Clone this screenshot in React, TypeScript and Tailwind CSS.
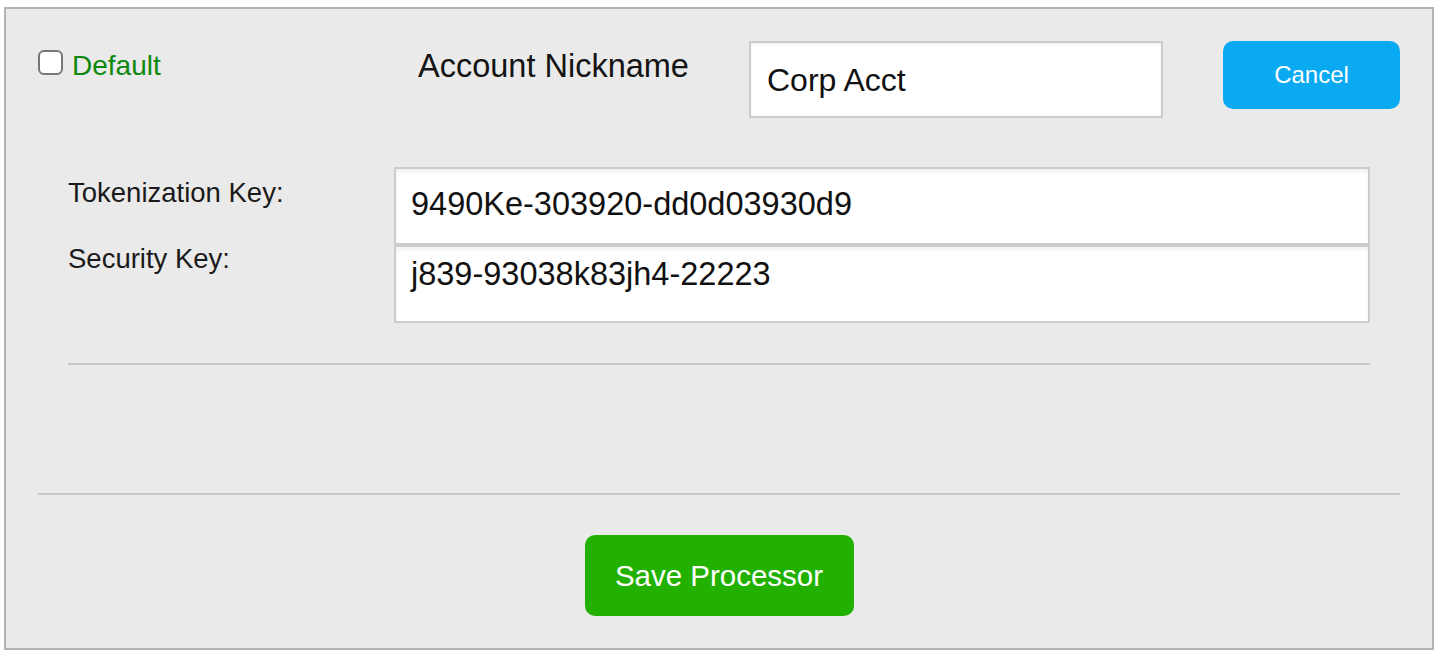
import React from "react";

export default function App() {
  return (
    <div className="pt-[7px] pl-[4px] font-['Liberation_Sans',Arial,sans-serif]">
      <div className="w-[1430px] h-[643px] border-2 border-[#b3b3b3] bg-[#eaeaea]">
        {/* Top row */}
        <div className="flex items-start pt-[32px] pl-[32px] pr-[32px]">
          <div className="w-[380px] flex items-start pt-[9px]">
            <div className="w-[25px] h-[25px] rounded-[6px] border-2 border-[#777777] bg-white" />
            <span className="ml-[9px] mt-[0px] text-[28px] leading-[31px] text-[#0d880d]">Default</span>
          </div>
          <div className="w-[331px] pt-[7px] text-[32.5px] leading-[36px] text-[#141414]">Account Nickname</div>
          <div className="w-[414px] h-[77px] border-2 border-[#cccccc] bg-white pl-[16px] pt-[19px] text-[32px] leading-[36px] text-[#111111] shadow-[inset_0_2px_3px_rgba(0,0,0,0.05)]">
            Corp Acct
          </div>
          <button className="ml-[60px] w-[177px] h-[68px] rounded-[10px] bg-[#09aaf2] text-white text-[24px] leading-[28px]">
            Cancel
          </button>
        </div>

        {/* Keys */}
        <div className="mx-[62px] mt-[49px] flex">
          <div className="w-[326px] flex flex-col text-[27.5px] leading-[30px] text-[#1a1a1a]">
            <div className="mt-[11px]">Tokenization Key:</div>
            <div className="mt-[36px]">Security Key:</div>
          </div>
          <div className="flex-1 flex flex-col">
            <div className="h-[78px] border-2 border-[#cccccc] bg-white pl-[15px] pt-[17px] text-[32.5px] leading-[36px] text-[#111111] shadow-[inset_0_3px_4px_rgba(0,0,0,0.06)]">
              9490Ke-303920-dd0d03930d9
            </div>
            <div className="h-[78px] border-2 border-[#cccccc] bg-white pl-[15px] pt-[9px] text-[32.5px] leading-[36px] text-[#111111] shadow-[inset_0_3px_4px_rgba(0,0,0,0.06)]">
              j839-93038k83jh4-22223
            </div>
          </div>
        </div>

        <div className="mx-[62px] mt-[40px] h-[2px] bg-[#c8c8c8]" />
        <div className="mx-[32px] mt-[128px] h-[2px] bg-[#c8c8c8]" />

        <div className="flex justify-center mt-[40px]">
          <button className="w-[269px] h-[81px] rounded-[10px] bg-[#22b100] text-white text-[29.5px] leading-[34px]">
            Save Processor
          </button>
        </div>
      </div>
    </div>
  );
}
